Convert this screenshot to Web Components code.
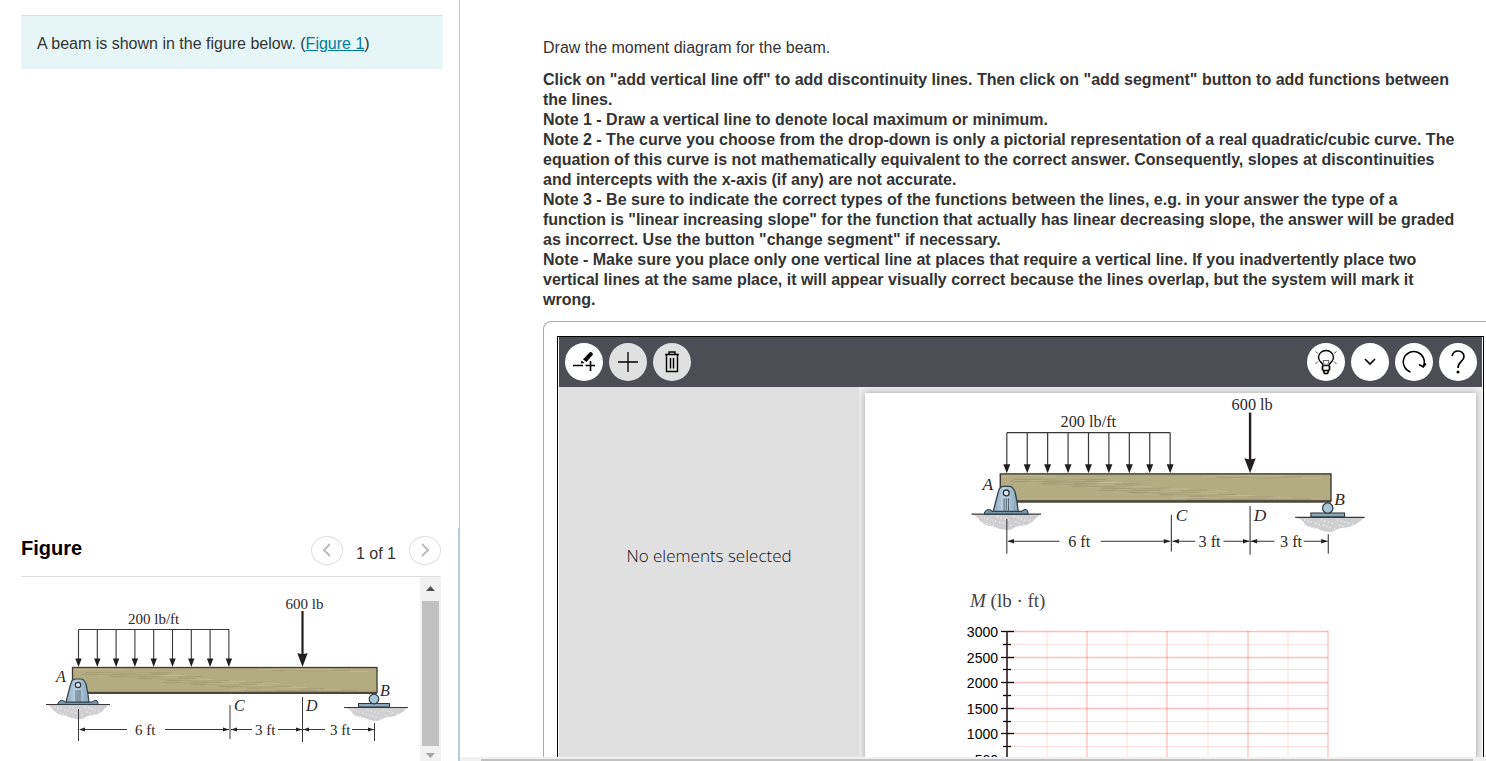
<!DOCTYPE html>
<html lang="en">
<head>
<meta charset="utf-8">
<title>Moment diagram</title>
<style>
  html, body { margin: 0; height: 100%; overflow: hidden; background: #fff; }
  body { font-family: "Liberation Sans", Arial, sans-serif; font-size: 16px; line-height: 20px; color: #333; }
</style>
</head>
<body>
<problem-page>
  <prompt-box slot="side">A beam is shown in the figure below.</prompt-box>
  <figure-panel slot="side"></figure-panel>
  <task-text slot="main"></task-text>
  <diagram-editor slot="main"></diagram-editor>
</problem-page>

<script>
const define = (name, html) => customElements.define(name, class extends HTMLElement {
  constructor() {
    super();
    const t = document.createElement('template');
    t.innerHTML = html;
    this.attachShadow({ mode: 'open' }).append(t.content.cloneNode(true));
  }
});

/* Beam with its loads, supports and dimensions */
const range = n => Array.from({ length: n }, (_, i) => i);
const loadArrows = range(9).map(i => {
  const x = 38.5 + i * 18.8;
  return `<path d="M${x} 36.5V68" class="line"/><path d="M${x - 3.2} 65.5h6.4L${x} 74z" fill="#231f20"/>`;
}).join('');
const tipLeft = x => `<path d="M${x} 136.5l6-2v4z" fill="#231f20"/>`;
const tipRight = x => `<path d="M${x} 136.5l-6-2v4z" fill="#231f20"/>`;
const grain = range(30).map(i => {
  const y = 76.5 + (i * 7) % 22, x = 34 + (i * 67) % 215, len = 50 + (i * 11) % 36;
  return `<path d="M${x} ${y}q${len / 2} ${i % 2 ? 1.5 : -1} ${len} 0" stroke="${i % 2 ? '#958d66' : '#c9c29b'}" stroke-width=".9" fill="none" opacity=".6"/>`;
}).join('');
const speckle = (ox, oy) => range(26).map(i =>
  `<circle cx="${ox + 8 + (i * 17) % 46}" cy="${oy + 3 + (i * 5) % 9}" r=".7" fill="#f3f3f3"/>`).join('');

define('beam-figure', `
<style>
  :host { display: block; }
  svg { display: block; width: 100%; height: auto; overflow: visible; }
  text { font: 15px "Liberation Serif", "Times New Roman", serif; fill: #2b2829; }
  .v { font-style: italic; font-size: 16px; }
  .line { stroke: #3a3637; stroke-width: 1.1; fill: none; }
  .dim { stroke: #3a3637; stroke-width: 1; fill: none; }
</style>
<svg viewBox="0 0 372 153" role="img" aria-label="Beam with a distributed load and a point load">
  <defs><linearGradient id="steel"><stop offset="0" stop-color="#8fabbf"/><stop offset=".45" stop-color="#bcd3e2"/><stop offset="1" stop-color="#86a3b6"/></linearGradient></defs>
  <path d="M38.5 36.5H189" class="line"/>${loadArrows}
  <path d="M262.5 18V64" stroke="#231f20" stroke-width="2.2"/><path d="M257.300 60q5.200 2 10.400 0L262.500 74z" fill="#231f20"/>
  <rect x="32.500" y="74.500" width="304.500" height="25" fill="#b3ab82"/>${grain}
  <rect x="32.500" y="74.500" width="304.500" height="25" fill="none" stroke="#3f3a33" stroke-width="1.300"/>
  <path d="M32 100H337" stroke="#4e463c" stroke-width="2"/>
  <path d="M7 112H69C63 116 62 121 54 122Q48 122 42 126Q34 127 26 123Q18 122 14 118Q11 113 7 112z" fill="#cfcfd1"/>${speckle(7, 111)}
  <path d="M6 111.500H70" stroke="#3a3637" stroke-width="1.200"/>
  <path d="M18 110q3-5 7-1h27q5-4 6 1v1.500H18z" fill="#7896a9" stroke="#2f3b43"/>
  <path d="M26 109Q29 97 31 90Q32 86 36 86H41Q44 86 46 91Q48 99 49 109z" fill="url(#steel)" stroke="#33424c" stroke-width="1.200"/>
  <path d="M36 109V97M38 109V97M40 109V97" stroke="#4c5f6b" stroke-width=".9"/>
  <circle cx="38" cy="92" r="2.700" fill="#dce9f0" stroke="#2c343a" stroke-width="1.200"/>
  <path d="M305 115H367C362 120 357 123 350 124Q344 124 338 128Q330 128 325 125Q316 124 313 121Q311 116 305 115z" fill="#cfcfd1"/>${speckle(305, 114)}
  <path d="M304 114.500H368" stroke="#3a3637" stroke-width="1.200"/>
  <rect x="318.500" y="110.500" width="31" height="3.500" fill="#8ba8b9" stroke="#2f3b43"/>
  <circle cx="334" cy="106" r="4.800" fill="#a9c6d6" stroke="#2c3b45" stroke-width="1.200"/>
  <path d="M38.500 116V148M190 112V146M262.500 104V149M334.500 130V148" class="dim"/>
  <path d="M40 136.500H87M125 136.500H189M191 136.500H212M238 136.500H262M263 136.500H285M312 136.500H334" class="dim"/>
  ${tipLeft(39)}${tipRight(189)}${tipLeft(191)}${tipRight(262)}${tipLeft(263)}${tipRight(334)}
  <text x="88" y="31">200 lb/ft</text><text x="245.500" y="16">600 lb</text>
  <text x="95" y="142">6 ft</text><text x="215" y="142">3 ft</text><text x="290" y="142">3 ft</text>
  <text class="v" x="16" y="89">A</text><text class="v" x="340" y="103">B</text>
  <text class="v" x="194" y="118">C</text><text class="v" x="266" y="118">D</text>
</svg>`);

/* Moment axes: 500 lb·ft per major row */
const rows = range(12).map(i => {
  const y = 12.5 + Math.round(i * 12.8), major = i % 2 === 0;
  return `<path d="M48 ${y}H368" stroke="#f00" stroke-opacity="${major ? .26 : .12}" stroke-width="${major ? 1.5 : 1}"/>
    <path d="M${major ? 41 : 43} ${y}H${major ? 54 : 51}" stroke="#000" stroke-width="1.3"/>
    ${major ? `<text x="38" y="${y + 5}" text-anchor="end">${3000 - i * 250}</text>` : ''}`;
}).join('');
const cols = range(8).map(i => {
  const x = 87 + Math.round(i * 40.15);
  return `<path d="M${x} 12V160" stroke="#f00" stroke-opacity="${i % 2 ? .2 : .09}" stroke-width="${i % 2 ? 1.6 : 1.4}"/>`;
}).join('');
define('moment-graph', `
<style>
  :host { display: block; }
  h2 { margin: 0 0 0 10px; font: 19px/24px "Liberation Serif", "Times New Roman", serif; color: #444; }
  svg { display: block; margin-top: 6px; overflow: visible; }
  text { font: 14px "Liberation Sans", Arial, sans-serif; fill: #000; }
</style>
<h2><i>M</i> (lb · ft)</h2>
<svg width="380" height="160" role="img" aria-label="Moment axes">${cols}${rows}
<path d="M47 12V160" stroke="#2a1a1c" stroke-width="1.6"/></svg>`);

define('prompt-box', `
<style>
  :host { display: block; margin: 15px 17px 0 21px; border-top: 1px solid #d9e0e0; background: #e6f6f7; padding: 18px 16px 15px; }
  a { color: #007a9c; }
</style>
<slot></slot> (<a href="#figure">Figure 1</a>)`);

define('scroll-track', `
<style>
  :host { display: flex; flex-direction: column; align-items: center; width: 21px; box-sizing: border-box; background: #f1f1f1; padding: 8px 2px 2px; }
  .thumb { flex: 1; align-self: stretch; margin: 10px 0 7px; background: #c1c1c1; }
  svg { display: block; }
</style>
<svg width="9" height="6"><path d="M0 6L4.500 1L9 6z" fill="#505050"/></svg>
<div class="thumb"></div>
<svg width="9" height="6"><path d="M0 0L4.500 5L9 0z" fill="#a3a3a3"/></svg>`);

define('figure-panel', `
<style>
  :host { display: flex; flex-direction: column; margin-top: auto; height: 233px; padding-left: 21px; border-right: 2px solid #bacbde; }
  header { display: flex; align-items: center; height: 48px; margin-right: 17px; border-bottom: 1px solid #ddd; }
  h1 { margin: 0 auto 8px 0; font-size: 20px; line-height: 24px; color: #000; }
  header span { margin: 4px 13px 0; }
  button { width: 32px; height: 29px; margin: 0 0 4px; padding: 0; border: 1px solid #dedede; border-radius: 50%; background: #fff; display: grid; place-items: center; }
  .view { flex: 1; min-height: 0; display: flex; margin-right: 17px; }
  .pane { flex: 1; overflow: hidden; padding: 16px 8px 0 19px; }
</style>
<header>
  <h1>Figure</h1>
  <button aria-label="Previous figure"><svg width="10" height="14" fill="none" stroke="#bbb" stroke-width="2"><path d="M8 1L2 7L8 13"/></svg></button>
  <span>1 of 1</span>
  <button aria-label="Next figure"><svg width="10" height="14" fill="none" stroke="#bbb" stroke-width="2"><path d="M2 1L8 7L2 13"/></svg></button>
</header>
<div class="view"><div class="pane" id="figure"><beam-figure></beam-figure></div><scroll-track></scroll-track></div>`);

define('task-text', `
<style>
  :host { display: block; padding: 38px 25px 0 0; }
  p { margin: 0; }
  .notes { margin-top: 12px; font-weight: bold; }
</style>
<p>Draw the moment diagram for the beam.</p>
<p class="notes">Click on "add vertical line off" to add discontinuity lines. Then click on "add segment" button to add functions between the lines.<br>
Note 1 - Draw a vertical line to denote local maximum or minimum.<br>
Note 2 - The curve you choose from the drop-down is only a pictorial representation of a real quadratic/cubic curve. The equation of this curve is not mathematically equivalent to the correct answer. Consequently, slopes at discontinuities and intercepts with the x-axis (if any) are not accurate.<br>
Note 3 - Be sure to indicate the correct types of the functions between the lines, e.g. in your answer the type of a function is "linear increasing slope" for the function that actually has linear decreasing slope, the answer will be graded as incorrect. Use the button "change segment" if necessary.<br>
Note - Make sure you place only one vertical line at places that require a vertical line. If you inadvertently place two vertical lines at the same place, it will appear visually correct because the lines overlap, but the system will mark it wrong.</p>`);

define('tool-button', `
<style>
  :host { display: block; }
  button { display: grid; place-items: center; width: 38px; height: 38px; padding: 0; border: 0; border-radius: 50%; background: #fff; }
  :host([muted]) button { background: #e0e0e0; }
</style>
<button><slot></slot></button>`);

define('diagram-editor', `
<style>
  :host { display: block; margin: 11px -13px 0 0; padding: 14px 14px 0 13px; border: 1px solid #aaa; border-bottom: 0; border-radius: 8px 0 0 0; }
  .app { border: 1px solid #000; border-bottom: 0; padding: 0 1px; }
  nav { display: flex; gap: 6px; align-items: center; height: 50px; padding: 0 5px 0 6px; background: #4d4d56; }
  .space { flex: 1; }
  svg { display: block; fill: none; stroke: #000; }
  .work { display: grid; grid-template-columns: 300px 1fr; min-height: 440px; }
  aside { background: #e0e0e0; padding-top: 157px; text-align: center; font: 300 17px/24px "Open Sans", "Noto Sans", sans-serif; color: #111; }
  .canvas { background: #ebebeb; padding: 6px 6px 0; }
  .sheet { display: flow-root; background: #fff; height: 434px; box-shadow: 0 0 6px rgba(0,0,0,.3); }
  beam-figure { width: 404px; margin-left: 100px; }
  moment-graph { margin: 30px 0 0 95px; }
</style>
<div class="app">
  <nav>
    <tool-button><svg width="24" height="24"><path d="M1 15.500H11M13.500 15.500H23M18.500 11V21" stroke-width="1.600"/><path d="M11 9.500L18 2Q20.500 1.500 21 4.500L14.500 12z" fill="#000" stroke="none"/><path d="M9.500 10.500L12.500 13L9 13.500z" fill="#000" stroke="none"/></svg></tool-button>
    <tool-button muted><svg width="22" height="22"><path d="M1 11H21M11 1V21" stroke-width="1.300"/></svg></tool-button>
    <tool-button muted><svg width="16" height="22"><path d="M1 3.500H15M5 3V1H11V3M2.500 4V20.500H13.500V4M6.500 7V17.500M9.500 7V17.500" stroke-width="1.400"/></svg></tool-button>
    <div class="space"></div>
    <tool-button><svg width="24" height="26"><path d="M9 16.500C9 13.500 4.500 13 4.500 8.500A7.500 7 0 0 1 19.500 8.500C19.500 13 15 13.500 15 16.500z" stroke-width="1.400"/><path d="M10.500 16.500L9 11.500H15L13.500 16.500" stroke="#666"/><path d="M8.500 17V20.500L9.500 21.500H14.500L15.500 20.500V17M9.500 22L10.500 24.500H13.500L14.500 22" stroke-width="1.700"/><path d="M1.500 2.500L4 4.500M22.500 2.500L20 4.500M1.500 15L4 12.500M22.500 15L20 12.500" stroke="#555"/></svg></tool-button>
    <tool-button><svg width="14" height="10"><path d="M2 2L7 7L12 2" stroke-width="1.600"/></svg></tool-button>
    <tool-button><svg width="26" height="24"><path d="M9.500 22A10.500 10.500 0 1 1 22.500 16M18 14.500L22.300 17L25 13.500" stroke-width="1.500"/></svg></tool-button>
    <tool-button><svg width="16" height="24"><path d="M2 6C3 2 5.500 1 8 1C11.500 1 14 3.500 14 6.500C14 11.500 8 11.500 8 18" stroke-width="1.700"/><circle cx="8" cy="22" r="1.500" fill="#000" stroke="none"/></svg></tool-button>
  </nav>
  <div class="work">
    <aside>No elements selected</aside>
    <div class="canvas"><div class="sheet"><beam-figure></beam-figure><moment-graph></moment-graph></div></div>
  </div>
</div>`);

define('problem-page', `
<style>
  :host { display: grid; grid-template-columns: 460px minmax(0, 1fr); height: 100vh; }
  .side { display: flex; flex-direction: column; box-sizing: border-box; min-height: 0; background: linear-gradient(#c3c8d4, #c3c8d4) right / 1px 100% no-repeat; }
  .main { display: flex; flex-direction: column; min-height: 0; overflow: hidden; }
  .body { flex: 1; min-height: 0; overflow: hidden; padding-left: 83px; }
  .bar { height: 4px; background: #f1f1f1; padding: 0 13px 0 21px; box-sizing: border-box; display: flex; align-items: flex-end; }
  .bar div { flex: 1; height: 2px; background: #c1c1c1; }
</style>
<div class="side"><slot name="side"></slot></div>
<div class="main"><div class="body"><slot name="main"></slot></div><div class="bar"><div></div></div></div>`);
</script>
</body>
</html>
